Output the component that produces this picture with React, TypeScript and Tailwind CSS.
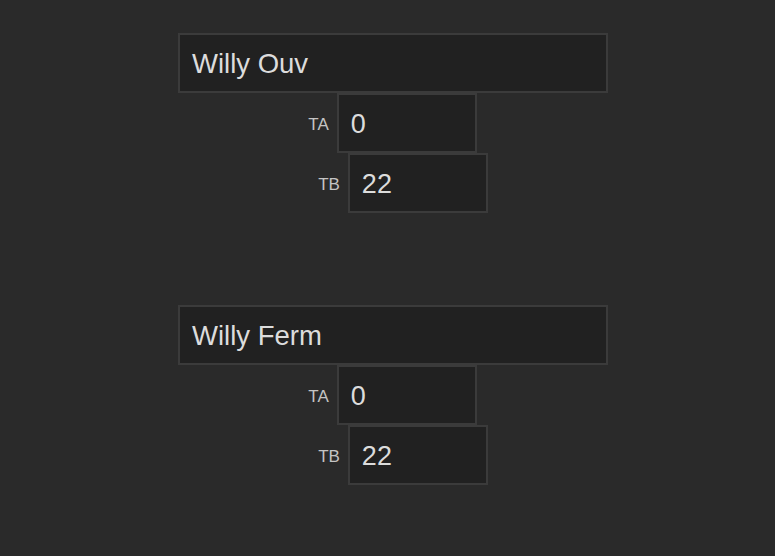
import React from "react";

function Group({ title }: { title: string }) {
  return (
    <div className="flex flex-col w-[430px]">
      <div className="h-[60px] w-[430px] border-2 border-[#3b3b3b] bg-[#212121] flex items-center pl-[12px] pt-[2px] text-[27.5px] text-[#dcdcdc]">
        {title}
      </div>
      <div className="flex items-center justify-center gap-[8px] pr-[1px]">
        <span className="text-[17px] text-[#c4c4c4] pt-[4px]">TA</span>
        <div className="h-[60px] w-[140px] border-2 border-[#3b3b3b] bg-[#212121] flex items-center pl-[12px] pt-[2px] text-[27px] text-[#dcdcdc]">
          0
        </div>
      </div>
      <div className="flex items-center justify-center gap-[8px] pl-[20px]">
        <span className="text-[17px] text-[#c4c4c4] pt-[4px]">TB</span>
        <div className="h-[60px] w-[140px] border-2 border-[#3b3b3b] bg-[#212121] flex items-center pl-[12px] pt-[2px] text-[27px] text-[#dcdcdc]">
          22
        </div>
      </div>
    </div>
  );
}

export default function App() {
  return (
    <div
      className="w-[775px] h-[556px] bg-[#2a2a2a] pl-[178px] pt-[33px] flex flex-col gap-[92px]"
      style={{ fontFamily: '"Liberation Sans", Arial, sans-serif' }}
    >
      <Group title="Willy Ouv" />
      <Group title="Willy Ferm" />
    </div>
  );
}
